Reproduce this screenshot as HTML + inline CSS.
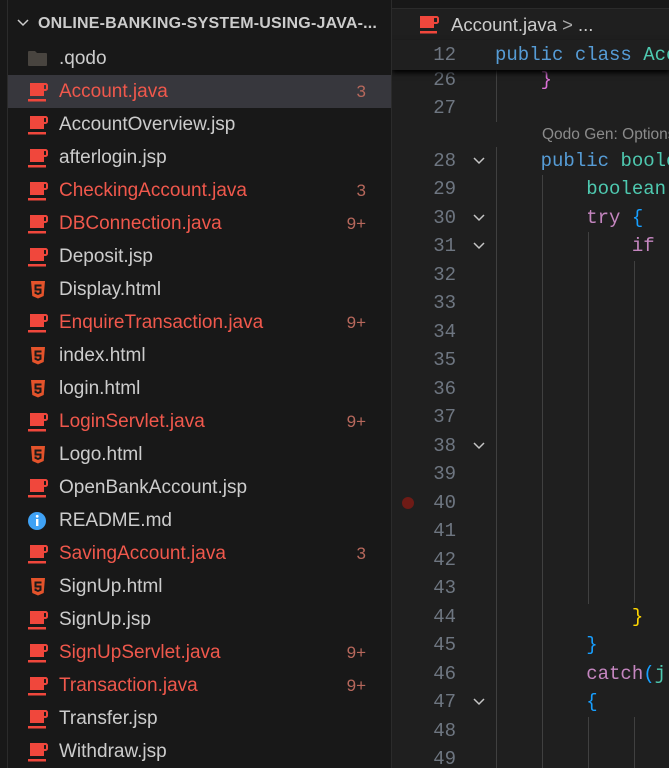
<!DOCTYPE html>
<html><head><meta charset="utf-8"><style>
*{margin:0;padding:0;box-sizing:border-box}
body{width:669px;height:768px;background:#181818;overflow:hidden;position:relative;font-family:"Liberation Sans",sans-serif}
.sb{position:absolute;left:0;top:0;width:391px;height:768px;background:#181818}
.hdr{position:absolute;left:38px;top:15px;font-weight:bold;font-size:16px;color:#cccccc;letter-spacing:0.2px;white-space:nowrap}
.row{position:absolute;left:8px;width:383px;height:33px}
.row.sel{background:#37373d}
.row .n{position:absolute;left:51px;top:6px;font-size:19px;color:#cccccc;white-space:nowrap}
.row.r .n{color:#f0584c}
.row .b{position:absolute;right:25px;top:7px;font-size:17px;color:#b7685c}
.row svg{position:absolute;left:19px;top:6px}
.ed{position:absolute;left:391px;top:0;width:278px;height:768px;background:#1f1f1f;border-left:1px solid #2b2b2b;overflow:hidden}
.top{position:absolute;left:0;top:0;width:278px;height:9px;background:#181818;border-bottom:1px solid #2b2b2b}
.mono{font-family:"Liberation Mono",monospace;font-size:19px}
.ln{position:absolute;width:64px;text-align:right;color:#6e7681;left:0}
.code{position:absolute;white-space:pre}
.g{position:absolute;width:1px;background:#404040}
.chev{position:absolute;left:80px}
</style></head><body>
<div class="sb">
<div style="position:absolute;left:7px;top:0;width:1px;height:768px;background:#2b2b2b"></div>
<svg style="position:absolute;left:16px;top:18px" width="14" height="10"><path d="M2 2 L7 7 L12 2" stroke="#cccccc" stroke-width="1.5" fill="none"/></svg>
<div class="hdr">ONLINE-BANKING-SYSTEM-USING-JAVA-...</div>
</div>
<div id="rows"></div>
<div class="ed">
<div class="top"></div>
<svg style="position:absolute;left:28px;top:16px" width="20" height="20" viewBox="0 0 20 20"><rect x="0" y="0" width="14" height="12" fill="#f0473c"/><rect x="13" y="1" width="5" height="6" rx="1.5" fill="none" stroke="#f0473c" stroke-width="2"/><rect x="-1" y="15" width="18" height="2.5" fill="#f0473c"/></svg>
<div style="position:absolute;left:59px;top:14px;font-size:18.5px;color:#cccccc;white-space:nowrap">Account.java <span style="color:#aaa">&gt;</span> ...</div>
<div style="position:absolute;left:0;top:40px;width:278px;height:30px;background:#1f1f1f;box-shadow:0 3px 5px #000;z-index:2">
<div class="mono ln" style="top:4px">12</div>
<div class="mono code" style="left:103px;top:4px"><span style="color:#569cd6">public</span> <span style="color:#569cd6">class</span> <span style="color:#4ec9b0">Account</span></div>
</div>
<div id="lines"></div>
<div style="position:absolute;left:150px;top:126px;font-size:15.5px;color:#8b8b8b;white-space:nowrap">Qodo Gen: Options</div>
<div style="position:absolute;left:10px;top:497px;width:12px;height:12px;border-radius:6px;background:#6e1b16"></div>
</div>
<script>
var items=[["f",".qodo",""],["j","Account.java","3",1,1],["j","AccountOverview.jsp",""],["j","afterlogin.jsp",""],["j","CheckingAccount.java","3",1],["j","DBConnection.java","9+",1],["j","Deposit.jsp",""],["h","Display.html",""],["j","EnquireTransaction.java","9+",1],["h","index.html",""],["h","login.html",""],["j","LoginServlet.java","9+",1],["h","Logo.html",""],["j","OpenBankAccount.jsp",""],["i","README.md",""],["j","SavingAccount.java","3",1],["h","SignUp.html",""],["j","SignUp.jsp",""],["j","SignUpServlet.java","9+",1],["j","Transaction.java","9+",1],["j","Transfer.jsp",""],["j","Withdraw.jsp",""]];
var ic={
j:'<svg width="22" height="22" viewBox="0 0 22 22"><rect x="3" y="2" width="14" height="13" fill="#f0473c"/><rect x="16" y="3" width="4" height="6" rx="1.5" fill="none" stroke="#f0473c" stroke-width="2"/><rect x="1" y="18" width="18" height="2.5" fill="#f0473c"/></svg>',
h:'<svg width="22" height="22" viewBox="0 0 22 22"><path d="M4 2 H18 L16.7 17 L11 19.5 L5.3 17 Z" fill="#e4532b"/><path d="M7.5 5.5 H14.5 V7.5 H9.5 V9.5 H14.5 V14.5 L11 16 L7.5 14.5 V12.5 H9.5 V13.3 L11 14 L12.5 13.3 V11.5 H7.5 Z" fill="#1a1a1a"/></svg>',
f:'<svg width="22" height="22" viewBox="0 0 22 22"><path d="M1 4 Q1 3 2 3 H8 L10 5 H19 Q20 5 20 6 V17 Q20 18 19 18 H2 Q1 18 1 17 Z" fill="#48443f"/></svg>',
i:'<svg width="22" height="22" viewBox="0 0 22 22"><circle cx="10" cy="11" r="9" fill="#3fa2f5"/><rect x="9" y="9" width="2.4" height="7" fill="#fff"/><circle cx="10.2" cy="6.3" r="1.4" fill="#fff"/></svg>'};
var h="";
items.forEach(function(it,k){var t=42+33*k;
h+='<div class="row'+(it[3]?' r':'')+(it[4]?' sel':'')+'" style="top:'+t+'px">'+ic[it[0]]+'<div class="n">'+it[1]+'</div><div class="b">'+it[2]+'</div></div>';});
document.getElementById('rows').innerHTML=h;
var P='    ';
var L=[[26,81,'    <span style="color:#da70d6">}</span>'],[27,109,''],[28,162,P+'<span style="color:#569cd6">public</span> <span style="color:#4ec9b0">boolean</span>',1],[29,190,P+'    <span style="color:#4ec9b0">boolean</span>'],[30,219,P+'    <span style="color:#c586c0">try</span> <span style="color:#179fff">{</span>',1],[31,247,P+'        <span style="color:#c586c0">if</span>',1]];
for(var n=32;n<=49;n++){var y=162+(n-28)*28.48;var c='';var ch=0;
if(n==38||n==47)ch=1;
if(n==44)c=P+'        <span style="color:#ffd700">}</span>';
if(n==45)c=P+'    <span style="color:#179fff">}</span>';
if(n==46)c=P+'    <span style="color:#c586c0">catch</span><span style="color:#179fff">(</span><span style="color:#4ec9b0">j</span>';
if(n==47)c=P+'    <span style="color:#179fff">{</span>';
L.push([n,Math.round(y),c,ch]);}
var s='';
L.forEach(function(l){s+='<div class="mono ln" style="top:'+(l[1]-12)+'px">'+l[0]+'</div><div class="mono code" style="left:103px;top:'+(l[1]-12)+'px">'+l[2]+'</div>';
if(l[3])s+='<svg class="chev" style="top:'+(l[1]-6)+'px" width="14" height="10"><path d="M2 2 L7 7 L12 2" stroke="#c5c5c5" stroke-width="1.5" fill="none"/></svg>';});
s+='<div class="g" style="left:104px;top:70px;height:52px"></div>';
s+='<div class="g" style="left:104px;top:147px;height:621px"></div>';
s+='<div class="g" style="left:150px;top:175px;height:593px"></div>';
s+='<div class="g" style="left:196px;top:232px;height:372px"></div>';
s+='<div class="g" style="left:196px;top:717px;height:51px"></div>';
s+='<div class="g" style="left:242px;top:261px;height:342px"></div>';
s+='<div class="g" style="left:242px;top:717px;height:51px"></div>';
document.getElementById('lines').innerHTML=s;
</script>
</body></html>
